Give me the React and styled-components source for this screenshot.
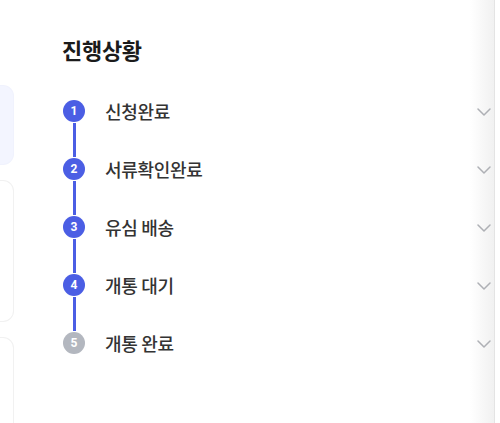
import React from "react";
import styled, { createGlobalStyle } from "styled-components";

const Global = createGlobalStyle`
  html, body { margin: 0; padding: 0; background: #fff; }
  body { font-family: "Noto Sans CJK KR", "Noto Sans", sans-serif; }
  * { box-sizing: border-box; }
`;

const Page = styled.div`
  display: flex;
  width: 500px;
  height: 423px;
  overflow: hidden;
  background: #fff;
`;

const LeftColumn = styled.div`
  width: 14px;
  flex-shrink: 0;
  display: flex;
  flex-direction: column;
  padding-top: 85px;
  gap: 15px;
`;

const SideCard = styled.div`
  height: ${(p) => p.$h}px;
  border-radius: 0 11px 11px 0;
  background: ${(p) => (p.$tint ? "#f3f5ff" : "#fff")};
  border: 1px solid ${(p) => (p.$tint ? "#f0f2fd" : "#f1f1f1")};
  border-left: none;
  flex-shrink: 0;
`;

const Main = styled.div`
  flex: 1;
  padding: 34px 0 0 48px;
  background: linear-gradient(to right, #fff calc(100% - 24px), #f1f1f1 100%);
`;

const RightEdge = styled.div`
  width: 6px;
  flex-shrink: 0;
  border-left: 1px solid #e4e4e4;
  background: #fff;
`;

const Title = styled.h2`
  margin: 0 0 36px;
  font-size: 22px;
  line-height: 30px;
  font-weight: 700;
  color: #1b1b1b;
  letter-spacing: -0.3px;
`;

const Steps = styled.ol`
  list-style: none;
  margin: 0;
  padding: 0;
`;

const Step = styled.li`
  display: flex;
  align-items: stretch;
  height: 58px;
  padding-left: 1px;
`;

const MarkerCol = styled.div`
  width: 22px;
  display: flex;
  flex-direction: column;
  align-items: center;
  flex-shrink: 0;
`;

const Circle = styled.span`
  width: 22px;
  height: 22px;
  border-radius: 50%;
  background: ${(p) => (p.$done ? "#4b5ee4" : "#b3b7bf")};
  color: #fff;
  font-family: "Roboto", "Noto Sans", sans-serif;
  font-size: 12px;
  font-weight: 700;
  display: flex;
  align-items: center;
  justify-content: center;
  flex-shrink: 0;
`;

const Line = styled.span`
  width: 3px;
  flex: 1;
  background: ${(p) => (p.$hidden ? "transparent" : "#4b5ee4")};
  margin: 1px 0;
`;

const Label = styled.span`
  flex: 1;
  margin-left: 20px;
  font-size: 18px;
  line-height: 22px;
  font-weight: 500;
  color: #333;
  letter-spacing: -0.3px;
`;

const Chevron = styled.svg`
  width: 14px;
  height: 22px;
  margin-right: 3px;
  flex-shrink: 0;
`;

const steps = [
  { n: 1, label: "신청완료", done: true },
  { n: 2, label: "서류확인완료", done: true },
  { n: 3, label: "유심 배송", done: true },
  { n: 4, label: "개통 대기", done: true },
  { n: 5, label: "개통 완료", done: false },
];

export default function App() {
  return (
    <>
      <Global />
      <Page>
        <LeftColumn>
          <SideCard $tint $h={80} />
          <SideCard $h={142} />
          <SideCard $h={100} />
        </LeftColumn>
        <Main>
          <Title>진행상황</Title>
          <Steps>
            {steps.map((s, i) => (
              <Step key={s.n}>
                <MarkerCol>
                  <Circle $done={s.done}>{s.n}</Circle>
                  <Line $hidden={i === steps.length - 1} />
                </MarkerCol>
                <Label>{s.label}</Label>
                <Chevron viewBox="0 0 14 22" fill="none">
                  <path d="M1 9l6 6 6-6" stroke="#aeb0b5" strokeWidth="1.5" strokeLinecap="round" strokeLinejoin="round" />
                </Chevron>
              </Step>
            ))}
          </Steps>
        </Main>
        <RightEdge />
      </Page>
    </>
  );
}
